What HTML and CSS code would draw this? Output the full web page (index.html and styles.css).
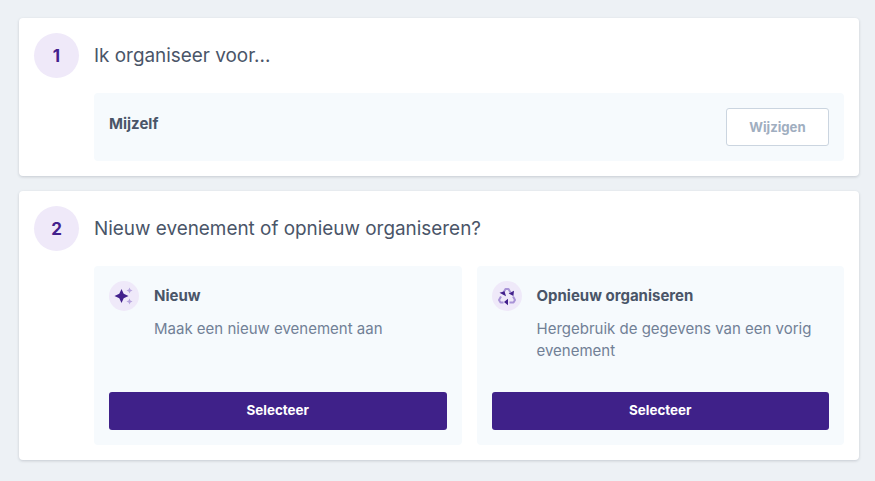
FILE: index.html
```html
<!DOCTYPE html>
<html lang="nl">
<head>
<meta charset="utf-8">
<title>Evenement</title>
<link rel="stylesheet" href="styles.css">
</head>
<body>
<main class="page">
  <section class="card">
    <header class="step-head">
      <span class="step-num">1</span>
      <h2 class="step-title">Ik organiseer voor...</h2>
    </header>
    <div class="summary">
      <strong class="summary-label">Mijzelf</strong>
      <button class="btn-outline" type="button">Wijzigen</button>
    </div>
  </section>
  <section class="card">
    <header class="step-head">
      <span class="step-num">2</span>
      <h2 class="step-title">Nieuw evenement of opnieuw organiseren?</h2>
    </header>
    <div class="options">
      <article class="option">
        <div class="option-main">
          <span class="option-icon">
            <svg width="20" height="20" viewBox="0 0 20 20">
              <path class="duo" d="M15.500 1.500l.9 2.100 2.100.9-2.100.9-.9 2.100-.9-2.100-2.100-.9 2.100-.9zM15.500 12.500l.9 2.100 2.100.9-2.100.9-.9 2.100-.9-2.100-2.100-.9 2.100-.9z"/>
              <path class="solid" d="M7.500 3l2.200 4.800 4.800 2.200-4.800 2.200-2.200 4.800-2.200-4.800-4.800-2.200 4.800-2.200z"/>
            </svg>
          </span>
          <div class="option-text">
            <h3 class="option-title">Nieuw</h3>
            <p class="option-desc">Maak een nieuw evenement aan</p>
          </div>
        </div>
        <button class="btn-primary" type="button">Selecteer</button>
      </article>
      <article class="option">
        <div class="option-main">
          <span class="option-icon">
            <svg width="20" height="20" viewBox="0 0 20 20">
              <path class="duo-line" d="M6.500 6.500L8.500 3h3l2 3.500M16 10.500l2 3.500-1.500 2.500H12.500M6.500 16.500H3.500L2 14l2-3.500"/>
              <path class="solid" d="M2.500 6.800l5-1.500 1.500 5zM17 4.800l-.6 5.300-4.700-2.700zM11 19.300l-4-3.300 4-3.300z"/>
            </svg>
          </span>
          <div class="option-text">
            <h3 class="option-title">Opnieuw organiseren</h3>
            <p class="option-desc">Hergebruik de gegevens van een vorig evenement</p>
          </div>
        </div>
        <button class="btn-primary" type="button">Selecteer</button>
      </article>
    </div>
  </section>
</main>
</body>
</html>
```

FILE: styles.css
```css
* { box-sizing: border-box; }
html, body { margin: 0; height: 100%; }
body {
  background: #edf1f5;
  font-family: Inter, "Liberation Sans", sans-serif;
  color: #4a5568;
  overflow: hidden;
}
.page {
  display: flex;
  flex-direction: column;
  gap: 15px;
  padding: 18px 16px 0 19px;
}
.card {
  background: #fff;
  border-radius: 4px;
  box-shadow: 0 1px 3px rgba(45, 55, 72, 0.2);
  padding: 15px;
}
.step-head {
  display: flex;
  align-items: center;
  gap: 15px;
  height: 45px;
}
.step-num {
  width: 45px;
  height: 45px;
  flex: none;
  display: flex;
  align-items: center;
  justify-content: center;
  border-radius: 50%;
  background: #efe9f9;
  color: #42208c;
  font-size: 17px;
  font-weight: 700;
}
.step-title {
  margin: 0;
  font-size: 18.9px;
  font-weight: 400;
  line-height: 28px;
  color: #4a5568;
}
.summary {
  display: flex;
  justify-content: space-between;
  align-items: flex-start;
  margin: 15px 0 0 60px;
  padding: 15px;
  height: 68px;
  background: #f6fafd;
  border-radius: 4px;
}
.summary-label {
  font-size: 15px;
  font-weight: 700;
  line-height: 32px;
}
.btn-outline {
  width: 103px;
  height: 38px;
  padding: 0 0 1px;
  background: #fff;
  border: 1px solid #cbd5e0;
  border-radius: 3px;
  color: #a0aec0;
  font: 700 13.2px Inter, "Liberation Sans", sans-serif;
}
.options {
  display: grid;
  grid-template-columns: 1fr 1fr;
  gap: 15px;
  margin: 15px 0 0 60px;
}
.option {
  display: flex;
  flex-direction: column;
  justify-content: space-between;
  height: 179px;
  padding: 15px;
  background: #f6fafd;
  border-radius: 4px;
}
.option-main {
  display: flex;
  gap: 15px;
}
.option-icon {
  width: 30px;
  height: 30px;
  flex: none;
  display: flex;
  align-items: center;
  justify-content: center;
  border-radius: 50%;
  background: #efe9f9;
}
.solid { fill: #42208c; }
.duo { fill: #b5a4dc; }
.duo-line { fill: none; stroke: #a893d6; stroke-width: 2; stroke-linejoin: round; }
.option-title {
  margin: 0;
  font-size: 15px;
  font-weight: 700;
  line-height: 30px;
  color: #4a5568;
}
.option-desc {
  margin: 7px 0 0;
  font-size: 15px;
  line-height: 22px;
  color: #718096;
}
.btn-primary {
  width: 100%;
  height: 38px;
  padding: 0 0 2px;
  background: #3f2189;
  border: 0;
  border-radius: 3px;
  color: #fff;
  font: 700 13.4px Inter, "Liberation Sans", sans-serif;
}
```
